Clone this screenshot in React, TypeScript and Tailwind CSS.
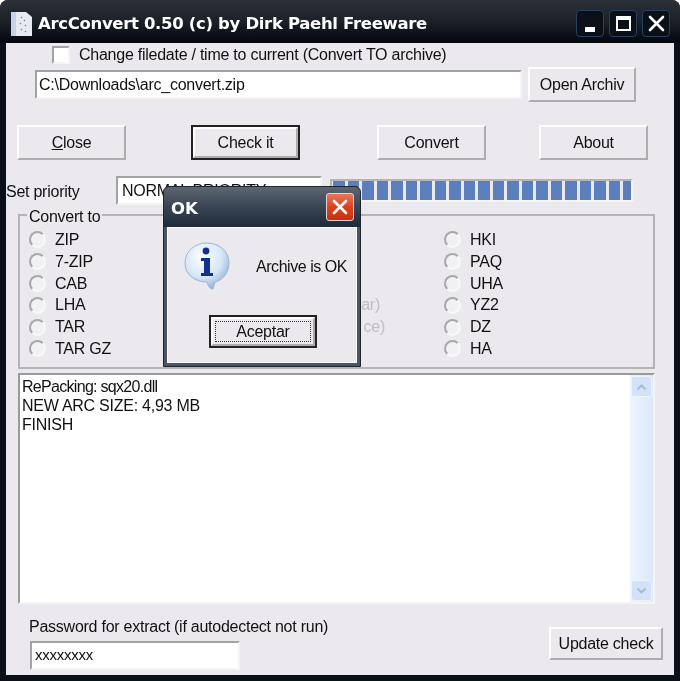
const ui = { fontFamily: '"Liberation Sans", Arial, sans-serif' };

const col1 = ['ZIP', '7-ZIP', 'CAB', 'LHA', 'TAR', 'TAR GZ'];
const col3 = ['HKI', 'PAQ', 'UHA', 'YZ2', 'DZ', 'HA'];
const segments = Array.from({ length: 21 });

function Btn({ children, className = '' }: { children: React.ReactNode; className?: string }) {
  return (
    <button className={`flex items-center justify-center bg-[#ebe9ed] border-2 border-t-white border-l-white border-r-[#adadad] border-b-[#adadad] text-[16px] tracking-[-0.25px] text-[#111] ${className}`}>
      {children}
    </button>
  );
}

function Radio({ label }: { label: string }) {
  return (
    <div className="flex items-center h-[21.8px]">
      <span className="w-[17px] h-[17px] rounded-full bg-[#f1f0f3] border-2 border-t-[#a8a8a8] border-l-[#a8a8a8] border-r-[#f8f8f8] border-b-[#f8f8f8] shrink-0" />
      <span className="ml-[9px] text-[16px] tracking-[-0.25px] text-[#111]">{label}</span>
    </div>
  );
}

function InfoIcon() {
  return (
    <svg width="48" height="50" viewBox="0 0 48 50">
      <defs>
        <radialGradient id="bubble" cx="0.4" cy="0.3" r="0.8">
          <stop offset="0" stopColor="#ffffff" />
          <stop offset="0.55" stopColor="#d6e6f6" />
          <stop offset="1" stopColor="#7fa6d0" />
        </radialGradient>
      </defs>
      <path d="M24 2C36 2 46 10 46 22C46 33 38 40 32 41L30 48C27 48 25 45 24 41C11 41 2 33 2 22C2 10 12 2 24 2Z" fill="url(#bubble)" stroke="#9db7d4" strokeWidth="1" />
      <circle cx="23" cy="10" r="3.4" fill="#12308f" />
      <path d="M18 17H27V32H30V35H18V32H21V20H18Z" fill="#12308f" />
    </svg>
  );
}

function DialogClose() {
  return (
    <div className="w-[28px] h-[28px] rounded-[3px] border border-[#d9d9d9] bg-gradient-to-b from-[#e8755a] via-[#e0401c] to-[#c92f0e] flex items-center justify-center">
      <svg width="18" height="18" viewBox="0 0 18 18">
        <path d="M3 3L15 15M15 3L3 15" stroke="#fff" strokeWidth="2.6" strokeLinecap="round" />
      </svg>
    </div>
  );
}

function CaptionBtn({ children }: { children: React.ReactNode }) {
  return (
    <div className="w-[28px] h-[27px] rounded-[4px] border border-[#27405f] bg-[#0a0f18] flex items-center justify-center">
      {children}
    </div>
  );
}

export default function App() {
  return (
    <div className="relative w-[680px] h-[681px] bg-white overflow-hidden blur-[0.3px]" style={ui}>
      <div className="w-full h-full flex flex-col rounded-t-[8px] bg-[#0b0f18] px-[6px] pb-[6px]">
        {/* title bar */}
        <div className="h-[43px] -mx-[6px] shrink-0 flex items-center pl-[9px] pr-[10px] pt-[4px] rounded-t-[8px] bg-gradient-to-b from-[#2c3138] via-[#1b2029] to-[#05070d]">
          <svg width="24" height="26" viewBox="0 0 24 26">
            <path d="M2 1H17L23 6V25H2Z" fill="#e8eaf2" />
            <path d="M2 1H7V25H2Z" fill="#c5d3ea" />
            <path d="M12 6l1 1M15 9l1 1M11 12l1 1M16 14l1 1M12 18l1 1M16 20l1 1" stroke="#7a86a0" strokeWidth="1.4" />
          </svg>
          <span className="ml-[5px] mt-[2px] text-[16.5px] font-bold text-white tracking-[-0.33px]" style={{ fontFamily: '"DejaVu Sans", sans-serif' }}>
            ArcConvert 0.50 (c) by Dirk Paehl Freeware
          </span>
          <div className="ml-auto flex gap-[5px]">
            <CaptionBtn>
              <span className="w-[10px] h-[5px] bg-white mt-[12px]" />
            </CaptionBtn>
            <CaptionBtn>
              <span className="w-[15px] h-[15px] border-2 border-t-[4px] border-white" />
            </CaptionBtn>
            <CaptionBtn>
              <svg width="17" height="17" viewBox="0 0 17 17">
                <path d="M2 2L15 15M15 2L2 15" stroke="#fff" strokeWidth="2.6" strokeLinecap="round" />
              </svg>
            </CaptionBtn>
          </div>
        </div>

        {/* client area */}
        <div className="flex-1 bg-[#ebe9ed] flex flex-col">
          <div className="flex items-center pl-[46px] pt-[3px] h-[21px]">
            <span className="w-[18px] h-[18px] bg-white border-2 border-t-[#a3a3a3] border-l-[#a3a3a3] border-r-[#f4f4f4] border-b-[#f4f4f4]" />
            <span className="ml-[9px] text-[16px] tracking-[-0.25px] text-[#111]">Change filedate / time to current (Convert TO archive)</span>
          </div>

          <div className="flex items-center pl-[29px] mt-[3px]">
            <div className="w-[487px] h-[29px] bg-white border-2 border-t-[#a3a3a3] border-l-[#a3a3a3] border-r-[#f4f4f4] border-b-[#f4f4f4] flex items-center pl-[2px] text-[16px] tracking-[-0.25px] text-[#111]">
              C:\Downloads\arc_convert.zip
            </div>
            <Btn className="ml-[6px] w-[108px] h-[35px]">Open Archiv</Btn>
          </div>

          <div className="flex pl-[11px] mt-[23px]">
            <Btn className="w-[109px] h-[35px]">
              <span><span className="underline">C</span>lose</span>
            </Btn>
            <div className="ml-[65px] w-[109px] h-[35px] border-2 border-[#222] flex">
              <Btn className="w-full h-full">Check it</Btn>
            </div>
            <Btn className="ml-[77px] w-[109px] h-[35px]">Convert</Btn>
            <Btn className="ml-[53px] w-[109px] h-[35px]">About</Btn>
          </div>

          <div className="flex items-center mt-[16px]">
            <span className="w-[110px] mt-[3px] text-[16px] tracking-[-0.25px] text-[#111]">Set priority</span>
            <div className="w-[206px] h-[29px] bg-white border-2 border-t-[#a3a3a3] border-l-[#a3a3a3] border-r-[#f4f4f4] border-b-[#f4f4f4] flex items-center pl-[4px] text-[16px] tracking-[-0.25px] text-[#111]">
              NORMAL PRIORITY
            </div>
            <div className="ml-[8px] w-[303px] h-[23px] border-2 border-t-[#b5b5b5] border-l-[#b5b5b5] border-r-[#f6f6f6] border-b-[#f6f6f6] flex gap-[3px] pl-[1px] overflow-hidden">
              {segments.map((_, i) => (
                <span key={i} className="w-[11.5px] h-full bg-[#5b7fbc] shrink-0" />
              ))}
            </div>
          </div>

          {/* convert group */}
          <div className="relative mt-[9px] ml-[12px] w-[637px] h-[155px] border-2 border-[#b4b4b6] grid grid-cols-[195px_220px_1fr] pt-[13px] pl-[9px]">
            <span className="absolute -top-[11px] left-[7px] bg-[#ebe9ed] px-[2px] text-[16px] tracking-[-0.25px] text-[#111]">Convert to</span>
            <div>
              {col1.map(t => <Radio key={t} label={t} />)}
            </div>
            <div className="flex flex-col items-end pt-[65px] text-[16px] tracking-[-0.25px] leading-[21.8px] text-[#c0bfc3]">
              <span className="pr-[64px]">ar)</span>
              <span className="pr-[59px]">ce)</span>
            </div>
            <div>
              {col3.map(t => <Radio key={t} label={t} />)}
            </div>
          </div>

          {/* log */}
          <div className="mt-[4px] ml-[12px] w-[637px] h-[231px] border-2 border-t-[#9a9a9a] border-l-[#9a9a9a] border-r-[#f4f4f4] border-b-[#f4f4f4] bg-white flex">
            <div className="flex-1 pl-[2px] pt-[2px] text-[16px] tracking-[-0.25px] leading-[19px] text-[#111]">
              <div className="tracking-[-0.7px]">RePacking: sqx20.dll</div>
              <div>NEW ARC SIZE: 4,93 MB</div>
              <div>FINISH</div>
            </div>
            <div className="w-[23px] bg-gradient-to-r from-[#eef4fd] to-[#dce8fb] flex flex-col justify-between p-[1px]">
              <div className="h-[21px] rounded-[3px] bg-[#d4e2f7] border border-[#eef4fd] flex items-center justify-center">
                <svg width="11" height="8" viewBox="0 0 11 8"><path d="M1.5 6.5L5.5 2.5L9.5 6.5" fill="none" stroke="#a5bdd8" strokeWidth="2" /></svg>
              </div>
              <div className="h-[21px] rounded-[3px] bg-[#d4e2f7] border border-[#eef4fd] flex items-center justify-center">
                <svg width="11" height="8" viewBox="0 0 11 8"><path d="M1.5 1.5L5.5 5.5L9.5 1.5" fill="none" stroke="#a5bdd8" strokeWidth="2" /></svg>
              </div>
            </div>
          </div>

          {/* bottom */}
          <div className="flex justify-between pl-[24px] pr-[11px]">
            <div className="pt-[13px]">
              <div className="-ml-px text-[16px] tracking-[-0.25px] leading-[19px] text-[#111]">Password for extract (if autodectect not run)</div>
              <div className="mt-[5px] w-[210px] h-[29px] bg-white border-2 border-t-[#a3a3a3] border-l-[#a3a3a3] border-r-[#f4f4f4] border-b-[#f4f4f4] flex items-center pl-[3px] text-[15px] tracking-[-0.25px] text-[#111]">
                xxxxxxxx
              </div>
            </div>
            <Btn className="mt-[23px] w-[114px] h-[33px]">Update check</Btn>
          </div>
        </div>
      </div>

      {/* message box */}
      <div className="absolute left-[163px] top-[186px] w-[198px] h-[181px] rounded-t-[6px] bg-[#4a5463] border border-[#1e2530] p-[3px] pt-0 flex flex-col">
        <div className="h-[40px] -mx-[3px] pl-[7px] pr-[6px] flex items-center justify-between rounded-t-[6px] bg-gradient-to-b from-[#5d6670] via-[#3a4554] to-[#1e2a3a]">
          <span className="mt-[4px] text-[16.5px] font-bold text-white" style={{ fontFamily: '"DejaVu Sans", sans-serif' }}>OK</span>
          <DialogClose />
        </div>
        <div className="flex-1 bg-[#ebe9ed] border border-white flex flex-col">
          <div className="flex pl-[15px] pt-[13px]">
            <InfoIcon />
            <span className="ml-[25px] mt-[16px] text-[16px] tracking-[-0.45px] leading-[19px] text-[#111] whitespace-nowrap">Archive is OK</span>
          </div>
          <div className="mt-[24px] ml-[41px] w-[108px] h-[33px] border-2 border-[#222] flex">
            <Btn className="w-full h-full">
              <span className="flex items-center justify-center w-[96px] h-[21px] border border-dotted border-[#333]">Aceptar</span>
            </Btn>
          </div>
        </div>
      </div>
    </div>
  );
}
